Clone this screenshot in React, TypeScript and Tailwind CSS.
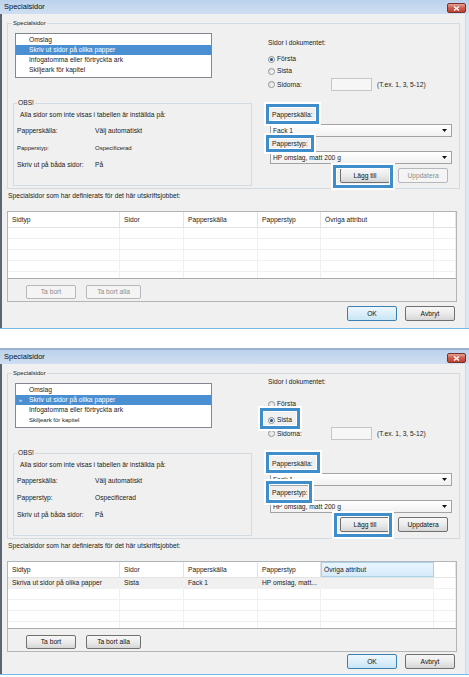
import React from "react";

type Variant = "first" | "second";

function Radio({ checked }: { checked?: boolean }) {
  return (
    <span className="inline-flex h-[7px] w-[7px] shrink-0 items-center justify-center rounded-full border border-[#8f9294] bg-gradient-to-br from-[#d9d9d9] to-white">
      {checked ? <span className="h-[3px] w-[3px] rounded-full bg-[#234f86]" /> : null}
    </span>
  );
}

function Combo({ value }: { value: string }) {
  return (
    <div className="ml-[2px] flex h-[13px] w-[182px] items-center justify-between border border-[#a3a3a3] bg-gradient-to-b from-white to-[#f1f1f1] pl-[2px] pr-[4px]">
      <span>{value}</span>
      <svg width="5" height="3" viewBox="0 0 5 3">
        <path d="M0 0h5L2.5 3z" fill="#111" />
      </svg>
    </div>
  );
}

function WinButton({ label, kind, className }: { label: string; kind: "normal" | "disabled" | "default"; className: string }) {
  const look =
    kind === "disabled"
      ? "border-[#b5b9bc] bg-[#f4f4f4] text-[#8d8d8d]"
      : kind === "default"
        ? "border-[#3c7fb1] bg-gradient-to-b from-[#eef7fd] to-[#c9e6f7] text-[#111]"
        : "border-[#707070] bg-gradient-to-b from-[#f7f7f7] via-[#ebebeb] to-[#d6d6d6] text-[#111]";
  return (
    <div className={`flex items-center justify-center rounded-[2px] border ${look} ${className}`}>{label}</div>
  );
}

// blue annotation frame laid over the dialog
function Mark({ className }: { className: string }) {
  return (
    <div
      className={`pointer-events-none absolute border-[3px] border-[#3f8dca] shadow-[0_0_0_2px_#ffffff,inset_0_0_0_1px_#ffffff] ${className}`}
    />
  );
}

function Dialog({ variant }: { variant: Variant }) {
  const second = variant === "second";
  const listItems = ["Omslag", "Skriv ut sidor på olika papper", "Infogatomma eller förtryckta ark", "Skiljeark för kapitel"];

  return (
    <div
      className={
        second
          ? "w-[469px] shrink-0 border-t-2 border-b border-t-[#9bb3d2] border-b-[#78b9e4] h-[327px]"
          : "w-[469px] shrink-0 border-b border-b-[#78b9e4] h-[329px]"
      }
    >
      <div className="relative flex h-full flex-col">
        {/* title bar */}
        <div className="flex h-[14px] shrink-0 items-start justify-between bg-gradient-to-b from-[#bcd2ec] to-[#cfdef2]">
          <span className="ml-[4px] mt-[2px] text-[7.5px] leading-[10px] text-[#101010]">Specialsidor</span>
          <div className="mr-[3px] mt-[3px] flex h-[10px] w-[19px] items-center justify-center rounded-[2px] border border-[#7a302b] bg-gradient-to-b from-[#e3a193] via-[#cf5a4b] to-[#c2402f]">
            <svg width="7" height="5" viewBox="0 0 7 5">
              <path d="M1 0.5l5 4M6 0.5l-5 4" stroke="#fff" strokeWidth="1.4" />
            </svg>
          </div>
        </div>

        {/* body */}
        <div className="flex min-h-0 flex-1">
          <div className="w-[2px] shrink-0 bg-[#5d6570]" />
          <div className="flex w-[463px] flex-col bg-[#f0f0f0]">
            {/* Specialsidor group */}
            <div className="relative ml-[5px] mt-[9px] h-[166px] w-[453px] border border-[#d3dbe2]">
              <span className="absolute -top-[6px] left-[4px] bg-[#f0f0f0] px-[1px] text-[6px] leading-[10px]">Specialsidor</span>
              <div className="flex">
                <div className="flex w-[252px] shrink-0 flex-col">
                  {/* listbox */}
                  <div className="ml-[7px] mt-[9px] h-[45px] w-[197px] border border-[#828790] bg-white pt-[1px]">
                    {listItems.map((item, i) => (
                      <div
                        key={item}
                        className={
                          i === 1
                            ? "relative flex h-[10px] items-center bg-[#4b8fd3] pl-[13px] text-white"
                            : "flex h-[10px] items-center pl-[13px]"
                        }
                      >
                        {i === 1 && second ? <span className="absolute left-[3px] text-[5px]">»</span> : null}
                        <span className={i === 3 && second ? "text-[6px]" : ""}>{item}</span>
                      </div>
                    ))}
                  </div>

                  {/* OBS group */}
                  <div className="relative ml-[5px] mt-[25px] h-[83px] w-[239px] border border-[#d3dbe2]">
                    <span className="absolute -top-[6px] left-[3px] bg-[#f0f0f0] px-[1px] leading-[10px]">OBS!</span>
                    <div className="mt-[6px] pl-[6px] leading-[10px]">Alla sidor som inte visas i tabellen är inställda på:</div>
                    <div className="mt-[6px] flex flex-col gap-[7px] pl-[3px]">
                      <div className="flex h-[10px] items-center">
                        <span className="w-[78px]">Papperskälla:</span>
                        <span>Välj automatiskt</span>
                      </div>
                      <div className={`flex h-[10px] items-center ${second ? "" : "text-[6px]"}`}>
                        <span className="w-[78px]">Papperstyp:</span>
                        <span>Ospecificerad</span>
                      </div>
                      <div className="flex h-[10px] items-center">
                        <span className="w-[78px]">Skriv ut på båda sidor:</span>
                        <span>På</span>
                      </div>
                    </div>
                  </div>
                </div>

                {/* right column */}
                <div className="flex flex-1 flex-col pl-[8px]">
                  <div className={`h-[10px] leading-[10px] ${second ? "mt-[3px]" : "mt-[14px]"}`}>Sidor i dokumentet:</div>
                  <div className={`flex h-[12px] items-center gap-[2px] ${second ? "mt-[11px]" : "mt-[5px]"}`}>
                    <Radio checked={!second} />
                    <span>Första</span>
                  </div>
                  <div className={`flex h-[12px] items-center gap-[2px] ${second ? "mt-[4px]" : ""}`}>
                    <Radio checked={second} />
                    <span>Sista</span>
                  </div>
                  <div className="mt-[1px] flex h-[13px] items-center">
                    <div className="flex w-[63px] items-center gap-[2px]">
                      <Radio />
                      <span>Sidorna:</span>
                    </div>
                    <div className="h-[13px] w-[41px] border border-[#c6c6c6] bg-[#f6f6f6]" />
                    <span className="ml-[5px]">(T.ex. 1, 3, 5-12)</span>
                  </div>

                  <div className="ml-[4px] mt-[19px] h-[10px] leading-[10px]">Papperskälla:</div>
                  <div className="mt-[4px]">
                    <Combo value="Fack 1" />
                  </div>
                  <div className="ml-[4px] mt-[2px] h-[10px] leading-[10px]">Papperstyp:</div>
                  <div className="mt-[2px]">
                    <Combo value="HP omslag, matt 200 g" />
                  </div>
                  <div className="ml-[72px] mt-[4px] flex gap-[8px]">
                    <WinButton label="Lägg till" kind="normal" className="h-[15px] w-[50px]" />
                    <WinButton label="Uppdatera" kind={second ? "normal" : "disabled"} className="h-[15px] w-[50px]" />
                  </div>
                </div>
              </div>
            </div>

            <div className="ml-[6px] mt-[2px] h-[10px] leading-[10px]">Specialsidor som har definierats för det här utskriftsjobbet:</div>

            {/* defined pages table */}
            <div className="ml-[5px] mt-[10px] flex h-[91px] w-[450px] flex-col border border-[#b3b6b9]">
              <div className="h-[67px] overflow-hidden border-b border-[#a9acaf] bg-white">
                <div className="grid h-[16px] grid-cols-[112px_64px_74px_63px_113px_1fr] border-b border-[#e3e3e3]">
                  {["Sidtyp", "Sidor", "Papperskälla", "Papperstyp", "Övriga attribut", ""].map((h, i) => (
                    <div
                      key={i}
                      className={
                        i === 4 && second
                          ? "flex items-center border border-[#a8d3f0] bg-gradient-to-b from-[#eaf5fd] to-[#d5eafa] pl-[2px]"
                          : "flex items-center border-r border-[#e3e3e3] pl-[4px]"
                      }
                    >
                      {h}
                    </div>
                  ))}
                </div>
                {[0, 1, 2, 3, 4].map((r) => (
                  <div key={r} className="grid h-[11px] grid-cols-[112px_64px_74px_63px_113px_1fr] border-b border-[#f0f0f0]">
                    {(second && r === 0
                      ? ["Skriva ut sidor på olika papper", "Sista", "Fack 1", "HP omslag, matt...", "", ""]
                      : ["", "", "", "", "", ""]
                    ).map((c, i) => (
                      <div
                        key={i}
                        className={
                          second && r === 0 && i < 5
                            ? "flex items-center overflow-hidden whitespace-nowrap bg-[#f0f0f0] pl-[4px]"
                            : "flex items-center border-r border-[#f0f0f0] pl-[4px]"
                        }
                      >
                        {c}
                      </div>
                    ))}
                  </div>
                ))}
              </div>
              <div className="flex gap-[10px] pl-[18px] pt-[6px]">
                <WinButton label="Ta bort" kind={second ? "normal" : "disabled"} className="h-[14px] w-[50px]" />
                <WinButton label="Ta bort alla" kind={second ? "normal" : "disabled"} className="h-[14px] w-[55px]" />
              </div>
            </div>

            <div className={`flex justify-end gap-[8px] pr-[10px] ${second ? "mt-[2px]" : "mt-[4px]"}`}>
              <WinButton label="OK" kind="default" className="h-[15px] w-[50px]" />
              <WinButton label="Avbryt" kind="normal" className="h-[15px] w-[50px]" />
            </div>
          </div>
          <div className="w-[4px] shrink-0 border-l border-[#c9d9ec] bg-[#dbe7f5]" />
        </div>

        {second ? (
          <>
            <Mark className="left-[260px] top-[58px] h-[21px] w-[40px]" />
            <Mark className="left-[266px] top-[102px] h-[21px] w-[54px]" />
            <Mark className="left-[266px] top-[131px] h-[22px] w-[46px]" />
            <Mark className="left-[334px] top-[163px] h-[24px] w-[58px]" />
          </>
        ) : (
          <>
            <Mark className="left-[266px] top-[104px] h-[20px] w-[53px]" />
            <Mark className="left-[266px] top-[135px] h-[17px] w-[48px]" />
            <Mark className="left-[333px] top-[165px] h-[23px] w-[60px]" />
          </>
        )}
      </div>
    </div>
  );
}

export default function App() {
  return (
    <div className="flex h-[677px] w-[469px] flex-col overflow-hidden bg-white font-['Liberation_Sans',Arial,sans-serif] text-[6.7px] leading-[10px] text-[#1b1b1b]">
      <Dialog variant="first" />
      <div className="h-[19px] shrink-0" />
      <Dialog variant="second" />
    </div>
  );
}
